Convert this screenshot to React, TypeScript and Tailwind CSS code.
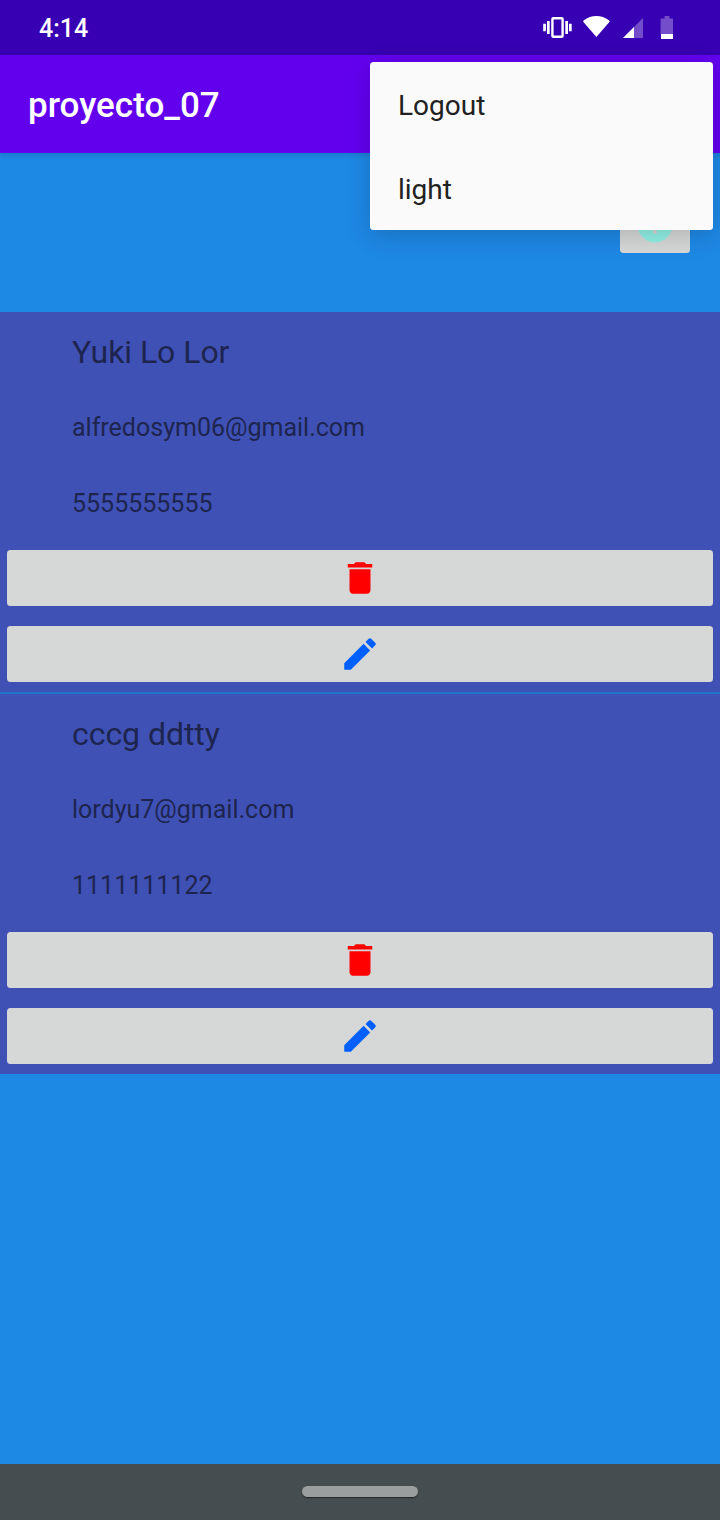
type Contact = { name: string; email: string; phone: string };

const contacts: Contact[] = [
  { name: "Yuki Lo Lor", email: "alfredosym06@gmail.com", phone: "5555555555" },
  { name: "cccg ddtty", email: "lordyu7@gmail.com", phone: "1111111122" },
];

function StatusBar() {
  return (
    <div className="flex h-[55px] shrink-0 items-center justify-between bg-[#3700b3] pl-[39px] pr-[46px] text-white">
      <span className="pt-[3px] text-[25px] font-medium leading-[30px]">4:14</span>
      <svg width="132" height="27" viewBox="0 0 132 27" fill="#fff">
        <rect x="10.400" y="4.300" width="10.200" height="18.400" rx="1" fill="none" stroke="#fff" strokeWidth="2.400" />
        <path d="M5 7h2.700v13H5zM1.200 9.700h2.700v7.600H1.200zM23.300 7h2.700v13h-2.700zM27 9.700h2.700v7.600h-2.700z" />
        <path d="M54.400 23L41.200 7.700C41 7.100 41.300 6.700 41.900 6.300C45.600 3.500 49.900 2 54.400 2S63.200 3.500 66.900 6.300C67.500 6.700 67.800 7.100 67.600 7.700Z" />
        <path d="M81 24L101 4V24Z" fillOpacity=".3" />
        <path d="M81 24L92 13V24Z" />
        <path d="M122.600 2H127.400V4.600H131V20H118.600V4.600H122.600Z" fillOpacity=".3" />
        <path d="M119 20H131V25H119Z" />
      </svg>
    </div>
  );
}

function DeleteIcon() {
  return (
    <svg width="42" height="42" viewBox="0 0 24 24" fill="#f00">
      <path d="M6 19c0 1.100.9 2 2 2h8c1.100 0 2-.9 2-2V7H6v12zM19 4h-3.500l-1-1h-5l-1 1H5v2h14V4z" />
    </svg>
  );
}

function EditIcon() {
  return (
    <svg width="42" height="42" viewBox="0 0 24 24" fill="#0060ff">
      <path d="M3 17.250V21h3.750L17.810 9.940l-3.750-3.750L3 17.250zM20.710 7.040c.39-.39.39-1.020 0-1.410l-2.340-2.340c-.39-.39-1.020-.39-1.410 0l-1.830 1.830 3.750 3.750 1.830-1.830z" />
    </svg>
  );
}

function ContactRow({ contact }: { contact: Contact }) {
  return (
    <li className="flex h-[380px] flex-col bg-[#3f51b5] px-[7px] text-[#1d254f]">
      <p className="flex h-20 items-center pl-[65px] text-[32px] tracking-[-0.05px]">{contact.name}</p>
      <p className="flex h-[72px] items-center pl-[65px] text-[25px]">{contact.email}</p>
      <p className="mt-1 flex h-[72px] items-center pl-[65px] text-[25px]">{contact.phone}</p>
      <button className="mt-[10px] flex h-14 items-center justify-center rounded-[3.5px] bg-[#d6d7d7]" aria-label="Delete">
        <DeleteIcon />
      </button>
      <button className="mt-5 flex h-14 items-center justify-center rounded-[3.5px] bg-[#d6d7d7]" aria-label="Edit">
        <EditIcon />
      </button>
    </li>
  );
}

export default function App() {
  return (
    <div className="relative flex h-[1520px] w-[720px] flex-col overflow-hidden bg-[#1e88e5] font-['Roboto',sans-serif]">
      <StatusBar />
      <header className="flex h-[98px] shrink-0 items-center bg-[#6200ee] pl-7 pt-[5px] text-[35px] font-medium text-white shadow-[0_2px_5px_rgba(0,0,0,0.14)]">
        proyecto_07
      </header>
      <main className="flex-1">
        <div className="flex h-[159px] justify-end pr-[30px] pt-11">
          <button className="flex h-14 w-[70px] items-center justify-center rounded-[3.5px] bg-[#d6d7d7]" aria-label="Add">
            <svg width="42" height="42" viewBox="0 0 24 24" fill="#92f0e5">
              <path d="M12 2C6.480 2 2 6.480 2 12s4.480 10 10 10 10-4.480 10-10S17.520 2 12 2zm5 11h-4v4h-2v-4H7v-2h4V7h2v4h4v2z" />
            </svg>
          </button>
        </div>
        <ul className="flex flex-col gap-0.5 bg-[#1976c8]">
          {contacts.map((contact) => (
            <ContactRow key={contact.email} contact={contact} />
          ))}
        </ul>
      </main>
      <nav className="flex h-14 shrink-0 items-center justify-center bg-[#464d51] pb-px">
        <div className="h-[11px] w-[116px] rounded-full bg-[#9b9e9f] shadow-[0_1px_1px_rgba(0,0,0,0.5)]" />
      </nav>
      <div className="absolute left-[370px] top-[62px] w-[343px] rounded-[3.5px] bg-[#fafafa] text-[28px] text-[#212121] shadow-[0_6px_24px_rgba(0,0,0,0.17)]">
        <div className="flex h-[84px] items-center pl-7 pt-[3px]">Logout</div>
        <div className="flex h-[84px] items-center pl-7 pt-[3px]">light</div>
      </div>
    </div>
  );
}
